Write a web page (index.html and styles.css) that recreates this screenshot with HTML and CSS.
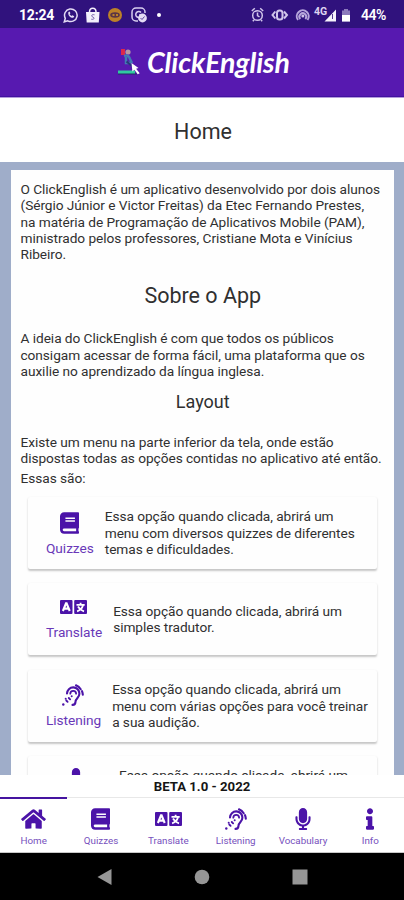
FILE: index.html
```
<!DOCTYPE html>
<html lang="pt-BR">
<head>
<meta charset="utf-8">
<title>ClickEnglish</title>
<link rel="stylesheet" href="styles.css">
</head>
<body>
<svg width="0" height="0" class="defs">
  <symbol id="book" viewBox="0 0 448 512"><path d="M448 360V24c0-13.3-10.7-24-24-24H96C43 0 0 43 0 96v320c0 53 43 96 96 96h328c13.3 0 24-10.7 24-24v-16c0-7.500-3.500-14.300-8.900-18.700-4.200-15.400-4.200-59.300 0-74.700 5.400-4.300 8.900-11.100 8.900-18.600zM128 134c0-3.300 2.700-6 6-6h212c3.300 0 6 2.700 6 6v20c0 3.300-2.700 6-6 6H134c-3.300 0-6-2.700-6-6v-20zm0 64c0-3.300 2.700-6 6-6h212c3.300 0 6 2.700 6 6v20c0 3.300-2.700 6-6 6H134c-3.300 0-6-2.700-6-6v-20zm253.400 250H96c-17.700 0-32-14.300-32-32 0-17.600 14.400-32 32-32h285.400c-1.900 17.100-1.900 46.900 0 64z"/></symbol>
  <symbol id="home" viewBox="0 0 576 512"><path d="M280.370 148.260L96 300.110V464a16 16 0 0 0 16 16l112.060-.29a16 16 0 0 0 15.920-16V368a16 16 0 0 1 16-16h64a16 16 0 0 1 16 16v95.640a16 16 0 0 0 16 16.050L464 480a16 16 0 0 0 16-16V300L295.670 148.260a12.190 12.190 0 0 0-15.300 0zM571.600 251.470L488 182.560V44.050a12 12 0 0 0-12-12h-56a12 12 0 0 0-12 12v72.610L318.470 43a48 48 0 0 0-61 0L4.340 251.470a12 12 0 0 0-1.600 16.900l25.500 31A12 12 0 0 0 45.150 301l235.220-193.740a12.190 12.190 0 0 1 15.300 0L530.900 301a12 12 0 0 0 16.900-1.600l25.500-31a12 12 0 0 0-1.700-16.930z"/></symbol>
  <symbol id="translate" viewBox="0 0 27 14"><rect width="12.500" height="14" rx="1"/><rect x="14.200" width="12.800" height="14" rx="1"/><g fill="none" stroke="#fff" stroke-width="2.100"><path d="M2.900 11 6 3.300h.6L9.700 11M4.300 8.600h4"/><path stroke-width="1.800" d="M16.500 4.800h8.200M20.600 2.700v2M23 5.200c-.7 3-2.800 5-5.900 6.100M18 6.500c1.300 2.500 3.200 4 6 4.900"/></g></symbol>
  <symbol id="listening" viewBox="0 0 22 22"><g fill="none" stroke="currentColor" stroke-width="2.100" stroke-linecap="round"><path d="M5 9.500a6.200 6.200 0 0 1 12.400.2c0 4.200-3.900 4.600-3.900 8 0 1.900-1.200 3.200-3 3.200"/><path d="M8.300 9.700a2.900 2.900 0 0 1 5.800 0" stroke-width="1.800"/><path d="M14 1.300a9.500 9.500 0 0 1 4.700 3.900M20 7.200c.5 1.200.7 2.300.8 3.500"/><path d="m6.800 14 1.300 1.300M4.300 16.500l1.300 1.300" stroke-width="1.900"/></g><circle cx="3.700" cy="14.700" r="1"/><circle cx="1.300" cy="20.500" r="1.200"/><circle cx="9.700" cy="12.300" r="1"/></symbol>
  <symbol id="mic" viewBox="0 0 352 512"><path d="M176 352c53.020 0 96-42.980 96-96V96c0-53.020-42.980-96-96-96S80 42.980 80 96v160c0 53.020 42.980 96 96 96zm160-160h-16c-8.840 0-16 7.160-16 16v48c0 74.800-64.490 134.820-140.790 127.380C96.710 376.890 48 317.110 48 250.300V208c0-8.840-7.160-16-16-16H16c-8.840 0-16 7.160-16 16v40.160c0 89.640 63.970 169.550 152 181.690V464H96c-8.840 0-16 7.160-16 16v16c0 8.840 7.160 16 16 16h160c8.840 0 16-7.160 16-16v-16c0-8.840-7.160-16-16-16h-56v-33.770C285.710 418.470 352 344.900 352 256v-48c0-8.840-7.160-16-16-16z"/></symbol>
  <symbol id="info" viewBox="0 0 192 512"><path d="M20 424.229h20V279.771H20c-11.046 0-20-8.954-20-20V212c0-11.046 8.954-20 20-20h112c11.046 0 20 8.954 20 20v212.229h20c11.046 0 20 8.954 20 20V492c0 11.046-8.954 20-20 20H20c-11.046 0-20-8.954-20-20v-47.771c0-11.046 8.954-20 20-20zM96 0C56.235 0 24 32.235 24 72s32.235 72 72 72 72-32.235 72-72S135.764 0 96 0z"/></symbol>
</svg>
<div class="screen">
  <div class="status">
    <span class="clock">12:24</span>
    <svg class="st-left" width="102" height="18" viewBox="0 0 102 18">
      <g fill="none" stroke="#e4dcf5" stroke-width="1.500"><path d="m1.300 15.800 1-3.500a6.300 6.300 0 1 1 2.500 2.500z"/><path d="M5.300 6.200c-.5 3.200 2.200 5.800 5 5.600l1-1.600-2-1-1 .8-1.700-1.800.8-1-.8-1.800z" fill="#e4dcf5" stroke="none"/></g>
      <path d="M23 6h13.500l-.7 10.500H23.700z" fill="#f3effb"/><path d="M26.500 6c0-5 6.500-5 6.500 0" fill="none" stroke="#f3effb" stroke-width="1.500"/><path d="M31.500 8.800c-3-.8-3.700 1.500-1.700 2.200s1.500 2.900-1.500 2.200" fill="none" stroke="#715aa7"/>
      <circle cx="52" cy="9" r="7" fill="#bd8128"/><ellipse cx="52" cy="9" rx="4.800" ry="2.800" fill="#5b3545"/><path d="M49.500 8h2v2h-2zm3.500 0h2v2h-2z" fill="#bd8128"/>
      <g fill="none" stroke="#d8cef0" stroke-width="1.500"><path d="M75 15h-2a4 4 0 0 1-4-4V6a4 4 0 0 1 4-4h5a4 4 0 0 1 4 4v1"/><path d="M78 6.500a3 3 0 1 0 0 4V9h-2"/></g><circle cx="79.500" cy="12" r="4.400" fill="#e5dcf5"/><path d="m77.500 12 1.500 1.500 2.500-3" fill="none" stroke="#5b459b"/>
      <circle cx="96" cy="9" r="2" fill="#fff"/>
    </svg>
    <svg class="st-right" width="108" height="18" viewBox="0 0 108 18">
      <g fill="none" stroke="#d1c5eb" stroke-width="1.500"><circle cx="6.500" cy="9.500" r="4.800"/><path d="M6.500 6.500v3l2 1.500M.8 5l3-2.700M12.200 5l-3-2.700M3 14l-1.200 1.300M10 14l1.200 1.300"/></g>
      <g fill="none" stroke="#d1c5eb" stroke-width="2"><rect x="26" y="4.500" width="5.500" height="9" rx="2.500"/><path d="M24.300 5.500 21.500 9l2.800 3.500M33 5.500 36 9l-3 3.500"/></g>
      <g fill="none" stroke="#b6a6db" stroke-width="2"><path d="M47 14a6 6 0 1 1 9.500 0M49.300 13a3.400 3.400 0 1 1 5 0"/></g><circle cx="51.800" cy="10" r="1.500" fill="#d1c5eb"/>
      <path d="M91 4.500h2V3h4v1.500h2v11h-8z" fill="#8c7abc"/><path d="M91 9h8v6.500h-8z" fill="#fff"/>
      <path d="M73.500 15.500 85 3.500v12z" fill="#f6f3fc"/><path d="M81.500 8v5" stroke="#513990"/>
    </svg>
    <span class="net">4G</span>
    <span class="battery">44%</span>
  </div>
  <header class="brand">
    <svg class="logo" width="24" height="28" viewBox="0 0 24 28"><path d="M3 1h4v6H3z" fill="#dd2949"/><circle cx="10" cy="4" r="2.600" fill="#b798a3"/><path d="M6 8c3-1 5 0 6 3l2 4M8 9v6h5" fill="none" stroke="#427bb5" stroke-width="2.500"/><path d="M8.500 13.500 14 18" stroke="#29377b" stroke-width="2"/><path d="M0 22.500h17v3.500H0z" fill="#30c9a0"/><path d="M0 26h19" stroke="#222a65"/><path d="m13.500 15 7 5-2.400.8 3.600 4.500-2 1-3.300-4.600-2 1.800z" fill="#fff"/></svg>
    <span class="name">ClickEnglish</span>
  </header>
  <h1 class="page-title">Home</h1>
  <main class="backdrop">
    <section class="sheet">
      <p class="intro">O ClickEnglish é um aplicativo desenvolvido por dois alunos<br>(Sérgio Júnior e Victor Freitas) da Etec Fernando Prestes,<br>na matéria de Programação de Aplicativos Mobile (PAM),<br>ministrado pelos professores, Cristiane Mota e Vinícius<br>Ribeiro.</p>
      <h2>Sobre o App</h2>
      <p>A ideia do ClickEnglish é com que todos os públicos<br>consigam acessar de forma fácil, uma plataforma que os<br>auxilie no aprendizado da língua inglesa.</p>
      <h3>Layout</h3>
      <p>Existe um menu na parte inferior da tela, onde estão<br>dispostas todas as opções contidas no aplicativo até então.</p>
      <p class="list-lead">Essas são:</p>
      <div class="options">
        <article class="option">
          <div class="kind"><svg class="i-book"><use href="#book"/></svg><span>Quizzes</span></div>
          <p>Essa opção quando clicada, abrirá um<br>menu com diversos quizzes de diferentes<br>temas e dificuldades.</p>
        </article>
        <article class="option">
          <div class="kind"><svg class="i-translate"><use href="#translate"/></svg><span>Translate</span></div>
          <p>Essa opção quando clicada, abrirá um<br>simples tradutor.</p>
        </article>
        <article class="option">
          <div class="kind"><svg class="i-listening"><use href="#listening"/></svg><span>Listening</span></div>
          <p>Essa opção quando clicada, abrirá um<br>menu com várias opções para você treinar<br>a sua audição.</p>
        </article>
        <article class="option last">
          <div class="kind"><svg class="i-mic"><use href="#mic"/></svg></div>
          <p>Essa opção quando clicada, abrirá um</p>
        </article>
      </div>
    </section>
  </main>
  <div class="version">BETA 1.0 - 2022</div>
  <nav class="tabs">
    <a class="tab active"><svg class="i-home"><use href="#home"/></svg><span>Home</span></a>
    <a class="tab"><svg class="i-book"><use href="#book"/></svg><span>Quizzes</span></a>
    <a class="tab"><svg class="i-translate"><use href="#translate"/></svg><span>Translate</span></a>
    <a class="tab"><svg class="i-listening"><use href="#listening"/></svg><span>Listening</span></a>
    <a class="tab"><svg class="i-mic"><use href="#mic"/></svg><span>Vocabulary</span></a>
    <a class="tab"><svg class="i-info"><use href="#info"/></svg><span>Info</span></a>
  </nav>
  <div class="system">
    <svg width="15" height="18"><path d="M14.500 1v16L.5 9z" fill="#969696"/></svg>
    <svg width="16" height="16"><circle cx="8" cy="8" r="7.300" fill="#969696"/></svg>
    <svg width="16" height="16"><path d="M.5.500h15v15H.5z" fill="#969696"/></svg>
  </div>
</div>
</body>
</html>
```
FILE: styles.css
```
* { box-sizing: border-box; }
body { margin: 0; font-family: Roboto, sans-serif; color: #303030; }
.defs { display: block; position: absolute; }
.screen { width: 404px; height: 900px; display: flex; flex-direction: column; overflow: hidden; background: #fff; }
h1, h2, h3, p { margin: 0; font-weight: 400; }
svg { flex: none; display: block; }

.status { height: 28px; flex: none; background: #30127d; display: flex; align-items: center; padding: 1px 17px 0 19px; color: #fff; position: relative; }
.clock { font-size: 14px; font-weight: 700; width: 44px; letter-spacing: -0.2px; }
.st-right { margin-left: auto; margin-right: 2px; }
.battery { font-size: 14px; font-weight: 600; width: 26px; letter-spacing: -0.5px; white-space: nowrap; }
.net { position: absolute; left: 314px; top: 6px; font-size: 10.500px; font-weight: 700; line-height: 12px; color: #ddd3f0; }

.brand { height: 70px; flex: none; background: #5719b0; border-bottom: 1px solid #b49bdc; box-shadow: inset 0 -1px #4212a0; display: flex; align-items: center; padding: 0 0 2px 118px; }
.name { font-family: Lato, sans-serif; font-style: italic; font-weight: 700; font-size: 28.500px; line-height: 34px; color: #fff; margin-left: 5px; letter-spacing: -0.1px; white-space: nowrap; }

.page-title { height: 64px; flex: none; font-size: 21.5px; line-height: 67px; text-align: center; padding-left: 2px; }

.backdrop { flex: 1; min-height: 0; overflow: hidden; background: #9fadc9; padding: 8px 10px 0 11px; }
.sheet { height: 605px; overflow: hidden; background: #fefefe; padding: 11px 0 0 9.500px; }
.sheet p { font-size: 13.7px; line-height: 16.300px; letter-spacing: -0.055px; white-space: nowrap; }
h2 { font-size: 21.500px; line-height: 26px; margin: 21px 9px 21px 0; text-align: center; }
h3 { font-size: 18px; line-height: 24px; margin: 11px 9px 19.500px 0; text-align: center; }
.sheet .list-lead { margin-top: 4px; }

.options { display: flex; flex-direction: column; gap: 14.500px; padding: 10px 17px 0 7.500px; }
.option { height: 72px; display: flex; align-items: center; gap: 11px; padding-left: 18px; border-radius: 2px; background: #fefefe; box-shadow: 0 1.500px 2px rgba(0, 0, 0, .22); }
.kind { display: flex; flex-direction: column; align-items: flex-start; color: #4b13a8; fill: #4b13a8; }
.kind svg { margin-left: 14px; }
.kind span { font-size: 13.700px; line-height: 16px; letter-spacing: -0.055px; color: #6938b8; }

.i-book { width: 19px; height: 22px; }
.i-translate { width: 27px; height: 14px; }
.i-listening { width: 22px; height: 22px; }
.i-mic { width: 16px; height: 22px; }
.i-info { width: 8px; height: 22px; }
.i-home { width: 25px; height: 22px; }
.kind .i-book { margin-top: 2px; margin-bottom: 6px; }
.kind .i-translate { margin-top: 2px; margin-bottom: 10px; }
.kind .i-listening { margin: 0 0 6px 16px; }
.last { align-items: flex-start; padding-top: 11px; }
.last .kind { width: 62px; }
.last .kind svg { margin: 1px 0 0 22px; }

.version { height: 23px; flex: none; font-size: 13.200px; font-weight: 700; line-height: 24px; text-align: center; color: #151515; border-bottom: 1px solid #e8e8e8; }
.tabs { height: 55px; flex: none; display: grid; grid-template-columns: repeat(6, 1fr); border-bottom: 1px solid #c8c8c8; }
.tab { display: flex; flex-direction: column; align-items: center; justify-content: flex-end; padding-bottom: 5px; color: #4b13a8; fill: #4b13a8; position: relative; }
.tab span { font-size: 9.800px; line-height: 12px; color: #7650bd; margin-top: 5px; }
.tab .i-translate { margin-bottom: 4px; }
.active::before { content: ""; position: absolute; left: 0; right: 0; top: -1px; height: 2px; background: #4514a0; }
.system { height: 47px; flex: none; background: #000; display: grid; grid-template-columns: 97px 98px 97px; justify-content: center; align-items: center; justify-items: center; }
```
